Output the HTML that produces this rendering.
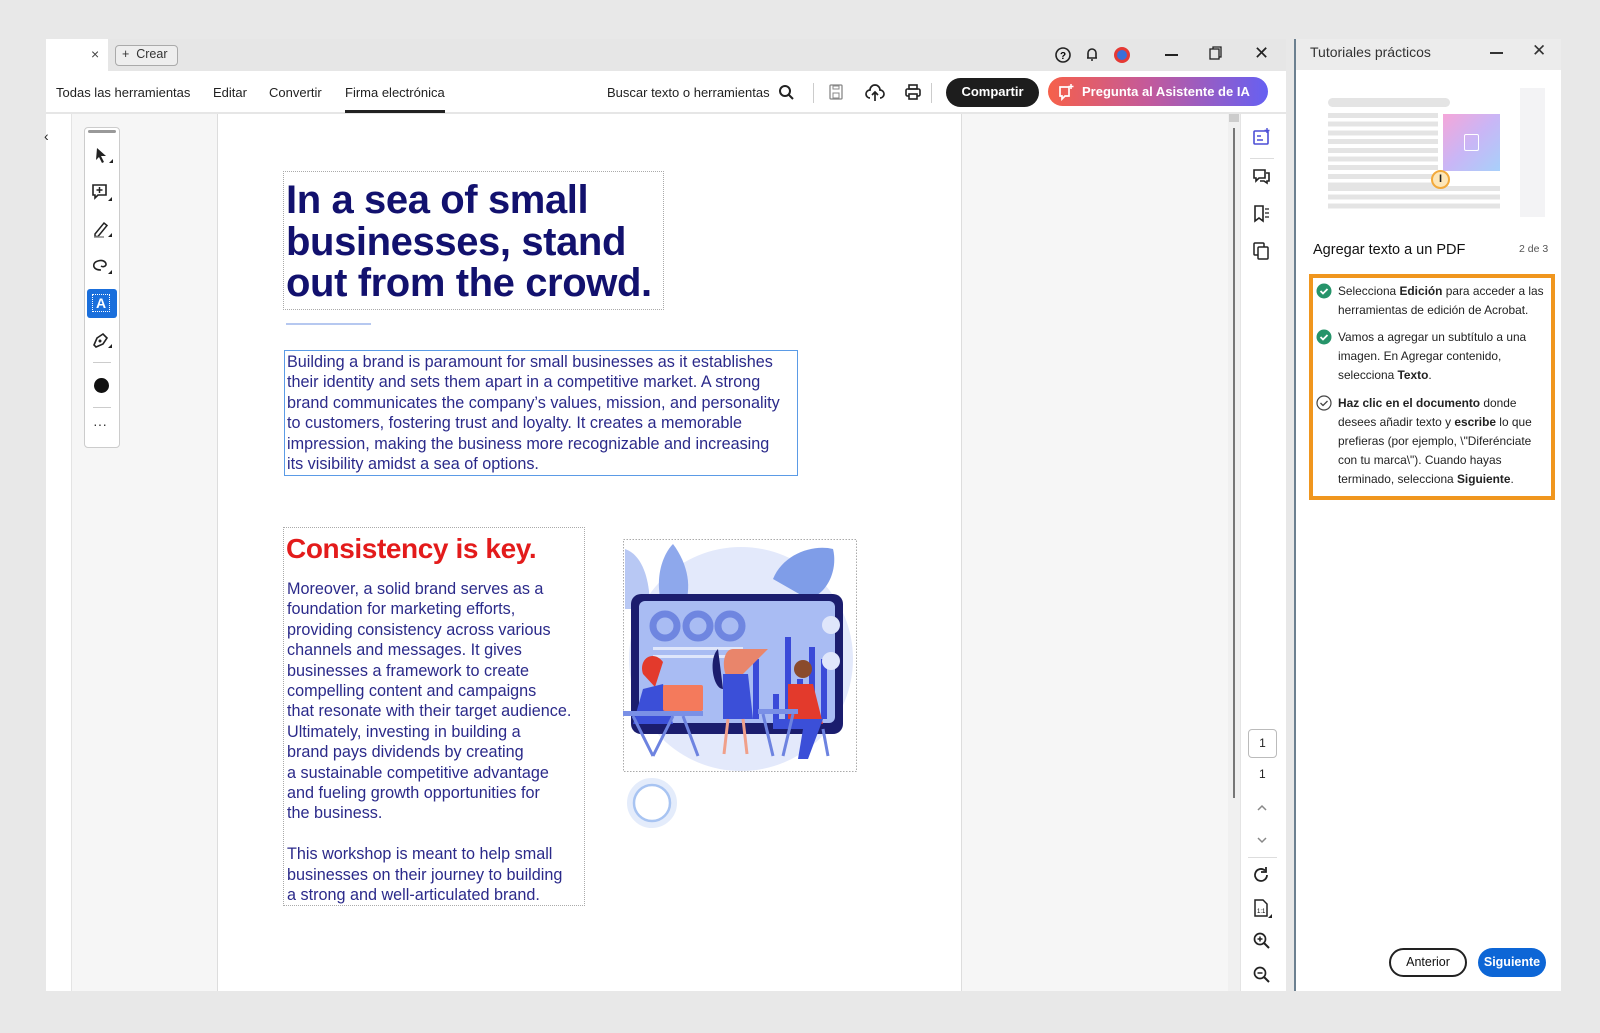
<!DOCTYPE html>
<html><head><meta charset="utf-8">
<style>
*{margin:0;padding:0;box-sizing:border-box}
body{width:1600px;height:1033px;background:#e8e8e8;position:relative;overflow:hidden;font-family:"Liberation Sans",Arial,sans-serif;color:#222}
.a{position:absolute}
.t{position:absolute;white-space:nowrap}
.body16{font-size:16.2px;line-height:20.4px;color:#2b2a8a;white-space:pre}
.ic{position:absolute}
.chk{font-size:11.9px;line-height:18.9px;color:#222;white-space:pre}
</style></head><body>
<div class="a" style="left:46px;top:39px;width:1240px;height:952px;background:#fff"></div>
<div class="a" style="left:46px;top:39px;width:1240px;height:32px;background:#e6e6e6"></div>
<div class="a" style="left:46px;top:39px;width:62px;height:32px;background:#fff"></div>
<div class="t" style="left:91px;top:46px;font-size:14px;color:#444">×</div>
<div class="a" style="left:115px;top:45px;width:63px;height:21px;border:1px solid #aaa;border-radius:4px;background:#eee"></div>
<div class="t" style="left:122px;top:47px;font-size:12.5px;color:#333">+&nbsp; Crear</div>
<svg class="ic" style="left:1054px;top:46px" width="18" height="18"><circle cx="9" cy="9" r="7" fill="none" stroke="#222" stroke-width="1.6"/><text x="9" y="13" font-size="10" text-anchor="middle" font-family="Liberation Sans" font-weight="bold">?</text></svg>
<svg class="ic" style="left:1083px;top:45px" width="18" height="18"><path d="M4 13h10M5 13V8a4 4 0 0 1 8 0v5M8 15h2" fill="none" stroke="#222" stroke-width="1.6"/></svg>
<svg class="ic" style="left:1113px;top:46px" width="18" height="18"><circle cx="9" cy="9" r="8" fill="#e53935"/><circle cx="9" cy="9" r="5" fill="#3b6fd8"/></svg>
<div class="a" style="left:1165px;top:54px;width:13px;height:2px;background:#222"></div>
<svg class="ic" style="left:1209px;top:46px" width="14" height="14"><rect x="1" y="3" width="9" height="10" fill="none" stroke="#222" stroke-width="1.3"/><path d="M4 3V1h8v10h-2" fill="none" stroke="#222" stroke-width="1.3"/></svg>
<div class="t" style="left:1254px;top:43px;font-size:18px;color:#222">✕</div>
<div class="a" style="left:46px;top:112px;width:1240px;height:2px;background:#e6e6e6"></div>
<div class="t" style="left:56px;top:85px;font-size:13px;color:#222">Todas las herramientas</div>
<div class="t" style="left:213px;top:85px;font-size:13px;color:#222">Editar</div>
<div class="t" style="left:269px;top:85px;font-size:13px;color:#222">Convertir</div>
<div class="t" style="left:345px;top:85px;font-size:13px;color:#222">Firma electrónica</div>
<div class="a" style="left:345px;top:110px;width:100px;height:3px;background:#222"></div>
<div class="t" style="left:607px;top:85px;font-size:13px;color:#222">Buscar texto o herramientas</div>
<svg class="ic" style="left:778px;top:84px" width="17" height="17"><circle cx="7" cy="7" r="5" fill="none" stroke="#222" stroke-width="2"/><path d="M11 11l4 4" stroke="#222" stroke-width="2"/></svg>
<div class="a" style="left:813px;top:83px;width:1px;height:20px;background:#ccc"></div>
<svg class="ic" style="left:828px;top:84px" width="16" height="16"><rect x="2" y="1" width="12" height="14" rx="1" fill="none" stroke="#888" stroke-width="1.3"/><rect x="5" y="9" width="6" height="5" fill="none" stroke="#888"/><rect x="5" y="2" width="6" height="3" fill="none" stroke="#888"/></svg>
<svg class="ic" style="left:865px;top:83px" width="20" height="20"><path d="M5 15a4 4 0 0 1 0-8 5 5 0 0 1 10 0 4 4 0 0 1 0 8" fill="none" stroke="#222" stroke-width="1.7"/><path d="M10 18V9M7 12l3-3 3 3" fill="none" stroke="#222" stroke-width="1.7"/></svg>
<svg class="ic" style="left:904px;top:83px" width="18" height="18"><rect x="5" y="2" width="8" height="4" fill="none" stroke="#222" stroke-width="1.6"/><rect x="2" y="6" width="14" height="7" rx="1.5" fill="none" stroke="#222" stroke-width="1.6"/><rect x="5" y="11" width="8" height="5" fill="#fff" stroke="#222" stroke-width="1.6"/></svg>
<div class="a" style="left:931px;top:83px;width:1px;height:20px;background:#ccc"></div>
<div class="a" style="left:946px;top:78px;width:93px;height:29px;border-radius:15px;background:#1d1d1d;color:#fff;font-size:13px;font-weight:bold;text-align:center;line-height:28px">Compartir</div>
<div class="a" style="left:1048px;top:77px;width:220px;height:29px;border-radius:15px;background:linear-gradient(90deg,#f6604a,#c45a9a 45%,#6660f2);color:#fff;font-size:13px;font-weight:bold;line-height:29px;padding-left:34px">Pregunta al Asistente de IA</div>
<svg class="ic" style="left:1057px;top:83px" width="18" height="18"><path d="M3 4h9v9H8l-3 3v-3H3z" fill="none" stroke="#fff" stroke-width="1.7"/><path d="M14 1v5M11.5 3.5h5" stroke="#fff" stroke-width="1.5"/></svg>
<div class="a" style="left:46px;top:114px;width:26px;height:877px;background:#fff;border-right:1px solid #e4e4e4"></div>
<div class="t" style="left:44px;top:128px;font-size:14px;color:#222">‹</div>
<div class="a" style="left:72px;top:114px;width:146px;height:877px;background:#f6f6f6"></div>
<div class="a" style="left:217px;top:114px;width:1px;height:877px;background:#ddd"></div>
<div class="a" style="left:218px;top:114px;width:743px;height:877px;background:#fff"></div>
<div class="a" style="left:961px;top:114px;width:279px;height:877px;background:#f6f6f6;border-left:1px solid #ddd"></div>
<div class="a" style="left:1228px;top:114px;width:12px;height:877px;background:#f0f0f0"></div>
<div class="a" style="left:1229px;top:114px;width:10px;height:8px;background:#ccc"></div>
<div class="a" style="left:1233px;top:128px;width:2px;height:670px;background:#777"></div>
<div class="a" style="left:1240px;top:114px;width:46px;height:877px;background:#fff;border-left:1px solid #e4e4e4"></div>
<div class="a" style="left:84px;top:127px;width:36px;height:321px;background:#fff;border:1px solid #ccc;border-radius:4px"></div>
<div class="a" style="left:88px;top:130px;width:28px;height:3px;background:#999;border-radius:2px"></div>
<svg class="ic" style="left:92px;top:146px" width="22" height="22"><path d="M5 2l9 8h-5l3 6-2 1-3-6-3 3z" fill="#222"/><path d="M17 17h4v-4z" fill="#222"/></svg>
<svg class="ic" style="left:91px;top:183px" width="22" height="22"><path d="M2 2h13v10H7l-3 3v-3H2z" fill="none" stroke="#222" stroke-width="1.6"/><path d="M8.5 4v6M5.5 7h6" stroke="#222" stroke-width="1.5"/><path d="M17 18h4v-4z" fill="#222"/></svg>
<svg class="ic" style="left:91px;top:219px" width="22" height="22"><path d="M4 15l9-11 3 2.5-9 11H4z" fill="none" stroke="#222" stroke-width="1.5"/><path d="M3 18h10" stroke="#888" stroke-width="1.5"/><path d="M17 18h4v-4z" fill="#222"/></svg>
<svg class="ic" style="left:91px;top:256px" width="22" height="22"><path d="M10 14C4 14 2 11 3 8s8-5 11-2-1 6-4 4" fill="none" stroke="#222" stroke-width="1.6"/><path d="M17 18h4v-4z" fill="#222"/></svg>
<div class="a" style="left:87px;top:289px;width:30px;height:29px;background:#1a6fdc;border-radius:3px"></div>
<div class="t" style="left:92px;top:294px;font-size:14px;color:#fff;font-weight:bold;border:1px dotted #fff;padding:0 3px;line-height:16px">A</div>
<svg class="ic" style="left:91px;top:329px" width="22" height="22"><path d="M3 16l3-7 6-4 4 4-4 6-7 3z" fill="none" stroke="#222" stroke-width="1.6"/><circle cx="9" cy="12" r="1.5" fill="#222"/><path d="M17 19h4v-4z" fill="#222"/></svg>
<div class="a" style="left:93px;top:362px;width:18px;height:1px;background:#ccc"></div>
<div class="a" style="left:94px;top:378px;width:15px;height:15px;border-radius:50%;background:#111"></div>
<div class="a" style="left:93px;top:407px;width:18px;height:1px;background:#ccc"></div>
<div class="t" style="left:93px;top:416px;font-size:14px;color:#333">···</div>
<div class="a" style="left:283px;top:171px;width:381px;height:139px;border:1px dotted #aaa"></div>
<div class="t" style="left:286px;top:180px;font-size:40px;line-height:41.5px;font-weight:bold;color:#12116e;letter-spacing:-0.4px;white-space:pre">In a sea of small
businesses, stand
out from the crowd.</div>
<div class="a" style="left:286px;top:323px;width:85px;height:2px;background:#b6c8f0"></div>
<div class="a" style="left:284px;top:350px;width:514px;height:126px;border:1.5px solid #5b9be6"></div>
<div class="t body16" style="left:287px;top:352px">Building a brand is paramount for small businesses as it establishes
their identity and sets them apart in a competitive market. A strong
brand communicates the company’s values, mission, and personality
to customers, fostering trust and loyalty. It creates a memorable
impression, making the business more recognizable and increasing
its visibility amidst a sea of options.</div>
<div class="a" style="left:283px;top:527px;width:302px;height:379px;border:1px dotted #aaa"></div>
<div class="t" style="left:286px;top:533px;font-size:28px;font-weight:bold;color:#e31b1b;letter-spacing:-0.4px">Consistency is key.</div>
<div class="t body16" style="left:287px;top:579px">Moreover, a solid brand serves as a
foundation for marketing efforts,
providing consistency across various
channels and messages. It gives
businesses a framework to create
compelling content and campaigns
that resonate with their target audience.
Ultimately, investing in building a
brand pays dividends by creating
a sustainable competitive advantage
and fueling growth opportunities for
the business.

This workshop is meant to help small
businesses on their journey to building
a strong and well-articulated brand.</div>
<svg class="a" style="left:623px;top:539px" width="234" height="233" viewBox="0 0 234 233">
<rect x="0.5" y="0.5" width="233" height="232" fill="none" stroke="#aaa" stroke-dasharray="1.5 1.5"/>
<circle cx="118" cy="120" r="112" fill="#e3e9fb"/>
<path d="M40 70C30 40 40 15 50 5c15 20 20 45 10 65z" fill="#8ea8ec"/>
<path d="M150 40c10-25 40-35 60-30 5 20-5 45-25 50z" fill="#7f9de8"/>
<path d="M2 10c15 5 25 25 25 60H2z" fill="#b8c8f4"/>
<rect x="8" y="55" width="212" height="140" rx="10" fill="#1b1d6e"/>
<rect x="16" y="62" width="196" height="122" rx="6" fill="#a9bcf3"/>
<circle cx="42" cy="87" r="12" fill="none" stroke="#6f86e0" stroke-width="7"/>
<circle cx="75" cy="87" r="12" fill="none" stroke="#6f86e0" stroke-width="7"/>
<circle cx="107" cy="87" r="12" fill="none" stroke="#6f86e0" stroke-width="7"/>
<rect x="30" y="108" width="90" height="3" fill="#dfe6fb"/><rect x="30" y="116" width="90" height="3" fill="#dfe6fb"/>
<rect x="150" y="155" width="6" height="25" fill="#3a4ad8"/><rect x="162" y="98" width="6" height="82" fill="#3a4ad8"/><rect x="174" y="140" width="6" height="40" fill="#3a4ad8"/><rect x="186" y="108" width="6" height="72" fill="#3a4ad8"/><rect x="198" y="120" width="6" height="60" fill="#3a4ad8"/>
<rect x="130" y="120" width="6" height="60" fill="#3a4ad8"/>
<circle cx="208" cy="86" r="9" fill="#dfe6fb"/><circle cx="208" cy="122" r="9" fill="#dfe6fb"/>
<path d="M20 135c-5-15 10-25 20-12l-8 25z" fill="#e33a2c"/>
<path d="M10 185l10-35 20-5 10 40z" fill="#3b4fd8"/>
<rect x="40" y="146" width="40" height="26" rx="2" fill="#f47a5c"/>
<rect x="0" y="172" width="80" height="5" fill="#7a90e6"/>
<path d="M10 177l20 40M50 177l-20 40M60 177l15 40" stroke="#6d83e0" stroke-width="3"/>
<path d="M110 110c-10 0-12 20-5 30l-5 40 25 0-5-45c5-5 15-15 25-25" fill="#e9856b"/>
<path d="M100 135l25 0 5 45-30 0z" fill="#3b4fd8"/>
<path d="M95 110c-10 10-5 40 5 40" fill="#1b1d6e"/>
<path d="M105 180l-4 35M120 180l4 35" stroke="#f0a08a" stroke-width="3"/>
<circle cx="180" cy="130" r="9" fill="#8a4b2c"/>
<path d="M165 145l25 0 10 40-35-5z" fill="#e33a2c"/>
<path d="M150 180l50 0-15 40-10 0 5-30-30 0z" fill="#3b4fd8"/>
<rect x="135" y="170" width="40" height="5" fill="#7a90e6"/>
<path d="M140 175l10 42M170 175l-10 42M200 190l5 27" stroke="#6d83e0" stroke-width="3"/>
</svg>
<svg class="a" style="left:624px;top:775px" width="56" height="56"><circle cx="28" cy="28" r="22" fill="none" stroke="#e4ecfb" stroke-width="6"/><circle cx="28" cy="28" r="18" fill="none" stroke="#a8c4f2" stroke-width="2.5"/></svg>
<svg class="ic" style="left:1253px;top:128px" width="18" height="18"><rect x="1" y="3" width="14" height="13" rx="1" fill="none" stroke="#4d4fd6" stroke-width="1.6"/><path d="M4 8h4M4 12h6" stroke="#4d4fd6" stroke-width="1.5"/><path d="M14 0v5M11.5 2.5h5" stroke="#4d4fd6" stroke-width="1.4"/></svg>
<div class="a" style="left:1250px;top:158px;width:24px;height:1px;background:#ddd"></div>
<svg class="ic" style="left:1253px;top:168px" width="18" height="18"><path d="M1 2h11v8H6l-3 3v-3H1z" fill="none" stroke="#222" stroke-width="1.6"/><path d="M13 5h3v8h-2v2l-3-2H7" fill="none" stroke="#222" stroke-width="1.6"/></svg>
<svg class="ic" style="left:1253px;top:205px" width="18" height="18"><path d="M2 1h8v15l-4-3-4 3z" fill="none" stroke="#222" stroke-width="1.6"/><path d="M12 4h4M12 8h4M12 12h4" stroke="#222" stroke-width="1.3"/></svg>
<svg class="ic" style="left:1253px;top:242px" width="18" height="18"><rect x="1" y="1" width="10" height="12" rx="1" fill="none" stroke="#222" stroke-width="1.5"/><rect x="5" y="5" width="10" height="12" rx="1" fill="#fff" stroke="#222" stroke-width="1.5"/></svg>
<div class="a" style="left:1248px;top:729px;width:29px;height:29px;border:1px solid #bbb;border-radius:4px;text-align:center;line-height:27px;font-size:12px;color:#222">1</div>
<div class="t" style="left:1259px;top:767px;font-size:12px;color:#222">1</div>
<svg class="ic" style="left:1256px;top:803px" width="12" height="10"><path d="M2 7l4-4 4 4" fill="none" stroke="#888" stroke-width="1.5"/></svg>
<svg class="ic" style="left:1256px;top:835px" width="12" height="10"><path d="M2 3l4 4 4-4" fill="none" stroke="#888" stroke-width="1.5"/></svg>
<div class="a" style="left:1248px;top:857px;width:29px;height:1px;background:#ddd"></div>
<svg class="ic" style="left:1253px;top:866px" width="18" height="18"><path d="M14 9a6 6 0 1 1-2-4.5" fill="none" stroke="#222" stroke-width="1.8"/><path d="M13 1v5H8" fill="none" stroke="#222" stroke-width="1.8"/></svg>
<svg class="ic" style="left:1253px;top:899px" width="20" height="20"><path d="M2 1h8l4 4v12H2z" fill="none" stroke="#222" stroke-width="1.5"/><text x="4" y="14" font-size="6" font-family="Liberation Sans">1:1</text><path d="M15 19h4v-4z" fill="#222"/></svg>
<svg class="ic" style="left:1253px;top:932px" width="18" height="18"><circle cx="7" cy="7" r="5.5" fill="none" stroke="#222" stroke-width="1.7"/><path d="M11 11l5 5" stroke="#222" stroke-width="2"/><path d="M4.5 7h5M7 4.5v5" stroke="#222" stroke-width="1.5"/></svg>
<svg class="ic" style="left:1253px;top:966px" width="18" height="18"><circle cx="7" cy="7" r="5.5" fill="none" stroke="#222" stroke-width="1.7"/><path d="M11 11l5 5" stroke="#222" stroke-width="2"/><path d="M4.5 7h5" stroke="#222" stroke-width="1.5"/></svg>
<div class="a" style="left:1294px;top:39px;width:267px;height:952px;background:#fff;border-left:2px solid #6c8090"></div>
<div class="a" style="left:1296px;top:39px;width:265px;height:31px;background:#ececec"></div>
<div class="t" style="left:1310px;top:44px;font-size:14px;color:#333">Tutoriales prácticos</div>
<div class="a" style="left:1490px;top:52px;width:13px;height:1.5px;background:#333"></div>
<div class="t" style="left:1532px;top:41px;font-size:17px;color:#333">✕</div>
<div class="a" style="left:1328px;top:98px;width:122px;height:9px;border-radius:5px;background:#e4e4e4"></div>
<div class="a" style="left:1328px;top:113px;width:110px;height:98px;background:repeating-linear-gradient(#e4e4e4 0 5px,#fff 5px 8.7px)"></div>
<div class="a" style="left:1328px;top:186px;width:172px;height:25px;background:repeating-linear-gradient(#e4e4e4 0 5px,#fff 5px 8.7px)"></div>
<div class="a" style="left:1443px;top:114px;width:57px;height:57px;background:linear-gradient(135deg,#f5a6d9,#c9b6f6 50%,#a8d0fa)"></div>
<div class="a" style="left:1464px;top:134px;width:15px;height:17px;border:1.5px solid #fff;border-radius:2px"></div>
<div class="a" style="left:1431px;top:170px;width:19px;height:19px;border-radius:50%;background:#fde6b8;border:2px solid #f2a93b;text-align:center;font-size:11px;line-height:15px;font-weight:bold">I</div>
<div class="a" style="left:1520px;top:88px;width:25px;height:129px;background:#f3f3f5"></div>
<div class="t" style="left:1313px;top:242px;font-size:14.5px;color:#111">Agregar texto a un PDF</div>
<div class="t" style="left:1519px;top:243px;font-size:10.5px;color:#555">2 de 3</div>
<div class="a" style="left:1309px;top:274px;width:246px;height:226px;border:4px solid #f0961e"></div>
<svg class="ic" style="left:1316px;top:283px" width="16" height="16"><circle cx="8" cy="8" r="7.5" fill="#26946a"/><path d="M4.5 8l2.5 2.5 4.5-4.5" fill="none" stroke="#fff" stroke-width="1.8"/></svg>
<svg class="ic" style="left:1316px;top:329px" width="16" height="16"><circle cx="8" cy="8" r="7.5" fill="#26946a"/><path d="M4.5 8l2.5 2.5 4.5-4.5" fill="none" stroke="#fff" stroke-width="1.8"/></svg>
<svg class="ic" style="left:1316px;top:395px" width="16" height="16"><circle cx="8" cy="8" r="7" fill="none" stroke="#444" stroke-width="1.2"/><path d="M4.5 8l2.5 2.5 4.5-4.5" fill="none" stroke="#444" stroke-width="1.3"/></svg>
<div class="t chk" style="left:1338px;top:282px">Selecciona <b>Edición</b> para acceder a las
herramientas de edición de Acrobat.</div>
<div class="t chk" style="left:1338px;top:328px">Vamos a agregar un subtítulo a una
imagen. En Agregar contenido,
selecciona <b>Texto</b>.</div>
<div class="t chk" style="left:1338px;top:394px"><b>Haz clic en el documento</b> donde
desees añadir texto y <b>escribe</b> lo que
prefieras (por ejemplo, \"Diferénciate
con tu marca\"). Cuando hayas
terminado, selecciona <b>Siguiente</b>.</div>
<div class="a" style="left:1389px;top:948px;width:78px;height:29px;border:2px solid #222;border-radius:15px;text-align:center;line-height:25px;font-size:12.5px;color:#111">Anterior</div>
<div class="a" style="left:1478px;top:948px;width:68px;height:29px;background:#0d66d6;border-radius:15px;text-align:center;line-height:29px;font-size:12.5px;font-weight:bold;color:#fff">Siguiente</div>
</body></html>
